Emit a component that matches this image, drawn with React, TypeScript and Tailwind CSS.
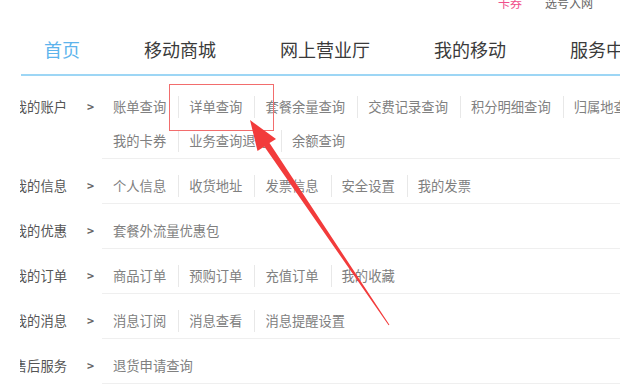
import React from 'react';

const navItems = ['首页', '移动商城', '网上营业厅', '我的移动', '服务中心'];

// each row: label + lines of links
const rows: { label: string; lines: string[][] }[] = [
  {
    label: '我的账户',
    lines: [
      ['账单查询', '详单查询', '套餐余量查询', '交费记录查询', '积分明细查询', '归属地查询'],
      ['我的卡券', '业务查询退订', '余额查询'],
    ],
  },
  { label: '我的信息', lines: [['个人信息', '收货地址', '发票信息', '安全设置', '我的发票']] },
  { label: '我的优惠', lines: [['套餐外流量优惠包']] },
  { label: '我的订单', lines: [['商品订单', '预购订单', '充值订单', '我的收藏']] },
  { label: '我的消息', lines: [['消息订阅', '消息查看', '消息提醒设置']] },
  { label: '售后服务', lines: [['退货申请查询']] },
];

const LinkLine: React.FC<{ items: string[] }> = ({ items }) => (
  <div className="h-[34px] flex items-center whitespace-nowrap">
    {items.map((it, i) => (
      <React.Fragment key={it}>
        {i > 0 && <span className="w-px h-[22px] bg-[#e8e8e8] ml-[12px] mr-[10px] shrink-0" />}
        <span className="shrink-0 text-[#808080]">{it}</span>
      </React.Fragment>
    ))}
  </div>
);

export default function App() {
  return (
    <div
      className="relative w-[620px] h-[387px] overflow-hidden bg-white"
      style={{ fontFamily: '"Noto Sans CJK SC", "Noto Sans", sans-serif' }}
    >
      {/* top links, cut by the window edge */}
      <div className="h-[20px] flex justify-end items-start pr-[27px] text-[12px] leading-[16px]">
        <div className="flex gap-[23px] -mt-[5px]">
          <span className="text-[#f0508c]">卡券</span>
          <span className="text-[#666]">选号入网</span>
        </div>
      </div>

      {/* main nav */}
      <div className="ml-[21px] h-[56px] pt-[4px] border-b-2 border-[#9dd6f5] flex items-center gap-[64px] pl-[23px] whitespace-nowrap text-[18px]">
        {navItems.map((n, i) => (
          <span key={n} className={i === 0 ? 'text-[#5db4ec]' : 'text-[#3a3a3a]'}>
            {n}
          </span>
        ))}
      </div>

      {/* account menu */}
      <div className="mt-[4px] text-[13.3px]">
        {rows.map(r => (
          <div key={r.label} className="flex">
            <div className="w-[102px] shrink-0 pt-[10px] flex items-start">
              <div className="h-[34px] flex items-center">
                <div className="w-[47px] ml-[20px] overflow-hidden flex justify-end">
                  <span className="shrink-0 whitespace-nowrap text-[#555]">{r.label}</span>
                </div>
                <span className="ml-[20px] text-[#666] font-bold text-[12px]">&gt;</span>
              </div>
            </div>
            <div className="flex-1 pl-[11px] pt-[10px] border-b border-[#efefef]">
              {r.lines.map((l, i) => (
                <LinkLine key={i} items={l} />
              ))}
            </div>
          </div>
        ))}
      </div>

      {/* annotation: red box + arrow */}
      <div className="absolute left-[169px] top-[84px] w-[105px] h-[47px] border border-[#f26d6d]" />
      <svg className="absolute left-0 top-0" width="620" height="387" viewBox="0 0 620 387">
        <polygon
          points="250,120 276,139 269.5,143 389.4,324.7 388.6,325.3 264.3,146.5 257.5,151"
          fill="#f23b3b"
        />
      </svg>
    </div>
  );
}
